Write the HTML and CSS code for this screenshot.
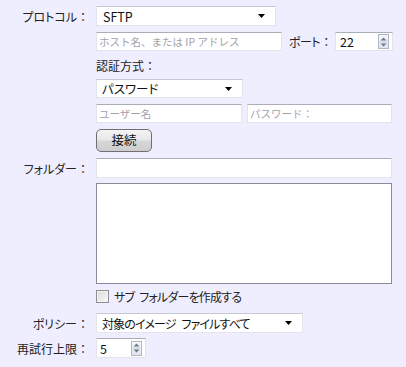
FILE: index.html
```html
<!doctype html>
<html>
<head>
  <meta charset="utf-8">
  <link rel="stylesheet" href="styles.css">
</head>
<body>
  <div class="form">

    <div class="row r1">
      <span class="label">プロトコル<span class="colon">：</span></span>
      <div class="select protocol">
        <span class="value">SFTP</span>
        <svg class="arrow" width="7" height="4" viewBox="0 0 7 4"><path d="M0 0H7L3.5 4Z" fill="#000"/></svg>
      </div>
    </div>

    <div class="row r2">
      <span class="label"></span>
      <div class="text host"><span class="hint">ホスト名、または IP アドレス</span></div>
      <span class="inline-label">ポート<span class="colon">：</span></span>
      <div class="text spin port">
        <span class="value">22</span>
        <span class="spinbtn">
          <svg width="7" height="12" viewBox="0 0 7 12"><path d="M0.5 4.5H6.5L3.5 1.5Z" fill="#6a7890"/><path d="M0.5 7.5H6.5L3.5 10.5Z" fill="#6a7890"/><path d="M0 6H7" stroke="#c4cad6" stroke-width="1"/></svg>
        </span>
      </div>
    </div>

    <div class="row r3">
      <span class="label"></span>
      <span class="sub-label">認証方式<span class="colon">：</span></span>
    </div>

    <div class="row r4">
      <span class="label"></span>
      <div class="select auth">
        <span class="value">パスワード</span>
        <svg class="arrow" width="7" height="4" viewBox="0 0 7 4"><path d="M0 0H7L3.5 4Z" fill="#000"/></svg>
      </div>
    </div>

    <div class="row r5">
      <span class="label"></span>
      <div class="text user"><span class="hint">ユーザー名</span></div>
      <div class="text password"><span class="hint">パスワード：</span></div>
    </div>

    <div class="row r6">
      <span class="label"></span>
      <button class="connect">接続</button>
    </div>

    <div class="row r7">
      <span class="label">フォルダー<span class="colon">：</span></span>
      <div class="text folder"></div>
    </div>

    <div class="row r8">
      <span class="label"></span>
      <div class="list"></div>
    </div>

    <div class="row r9">
      <span class="label"></span>
      <span class="checkbox"></span>
      <span class="check-label">サブ フォルダーを作成する</span>
    </div>

    <div class="row r10">
      <span class="label">ポリシー<span class="colon">：</span></span>
      <div class="select policy">
        <span class="value">対象のイメージ ファイルすべて</span>
        <svg class="arrow" width="7" height="4" viewBox="0 0 7 4"><path d="M0 0H7L3.5 4Z" fill="#000"/></svg>
      </div>
    </div>

    <div class="row r11">
      <span class="label">再試行上限<span class="colon">：</span></span>
      <div class="text spin retry">
        <span class="value">5</span>
        <span class="spinbtn">
          <svg width="7" height="12" viewBox="0 0 7 12"><path d="M0.5 4.5H6.5L3.5 1.5Z" fill="#6a7890"/><path d="M0.5 7.5H6.5L3.5 10.5Z" fill="#6a7890"/><path d="M0 6H7" stroke="#c4cad6" stroke-width="1"/></svg>
        </span>
      </div>
    </div>

  </div>
</body>
</html>
```

FILE: styles.css
```css
body{
  margin: 0;
  background-color: #efeeff;
  font-family: "Noto Sans CJK JP", "Noto Sans", sans-serif;
  font-size: 12px;
  color: #222;
  font-feature-settings: "palt";
}
.form{
  display: flex;
  flex-direction: column;
  width: 406px;
  height: 367px;
}
.row{
  display: flex;
  align-items: center;
}
.label{
  width: 89px;
  margin-right: 7px;
  text-align: right;
  flex-shrink: 0;
  white-space: nowrap;
}
.colon{
  font-feature-settings: normal;
}

.r1{ margin-top: 6px; height: 20px; }
.r2{ margin-top: 6px; height: 19px; }
.r3{ margin-top: 5px; height: 18px; }
.r4{ margin-top: 5px; height: 19px; }
.r5{ margin-top: 6px; height: 19px; }
.r6{ margin-top: 6px; height: 23px; }
.r7{ margin-top: 6px; height: 20px; }
.r8{ margin-top: 5px; height: 101px; align-items: stretch; }
.r9{ margin-top: 6px; height: 13px; }
.r10{ margin-top: 10px; height: 20px; }
.r11{ margin-top: 5px; height: 20px; }

.text,
.select{
  box-sizing: border-box;
  height: 100%;
  background: #fff;
  border: 1px solid #e2e4ec;
  border-top-color: #abadb8;
  display: flex;
  align-items: center;
  padding-left: 2px;
}
.select{
  border-color: #e4e4ee;
  border-top-color: #c8c8d4;
  padding-left: 6px;
  padding-right: 10px;
  justify-content: space-between;
  color: #111;
  font-size: 12.5px;
}
.protocol{ width: 180px; }
.auth{ width: 147px; padding-left: 5px; }
.policy{
  width: 207px;
  padding-left: 5px;
  font-size: 12px;
  letter-spacing: -0.9px;
  word-spacing: 4px;
}

.hint{
  color: #a2a2aa;
  white-space: nowrap;
  font-size: 10.5px;
  font-feature-settings: normal;
}
.value{
  color: #111;
}
.host{ width: 186px; }
.inline-label{
  margin-left: 7px;
  width: 46px;
  flex-shrink: 0;
  white-space: nowrap;
  letter-spacing: -0.5px;
}
.port{ width: 58px; }
.user{ width: 146px; }
.password{ width: 145px; margin-left: 5px; }

.spin{
  justify-content: space-between;
  padding-left: 4px;
  padding-right: 3px;
  font-size: 12.5px;
}
.spinbtn{
  box-sizing: border-box;
  width: 11px;
  height: 15px;
  border: 1px solid #b0b6c4;
  background: linear-gradient(#f6f8fb, #dfe4ec);
  display: flex;
  align-items: center;
  justify-content: center;
}
.retry{ width: 50px; padding-left: 3px; }

.connect{
  box-sizing: border-box;
  width: 56px;
  height: 23px;
  border: 1px solid #6e6e74;
  border-radius: 5px;
  background: linear-gradient(#f4f4f4 0%, #e8e8e8 45%, #d6d6d6 55%, #cdcdcd 100%);
  font-family: "Noto Sans CJK JP", sans-serif;
  font-size: 12.5px;
  color: #111;
  padding: 0;
  line-height: 1;
}

.folder{ width: 296px; }
.list{
  box-sizing: border-box;
  width: 296px;
  background: #fff;
  border: 1px solid #8a8a9a;
}

.checkbox{
  box-sizing: border-box;
  width: 13px;
  height: 13px;
  border: 1px solid #8e8f94;
  background: linear-gradient(135deg, #dcdcdc, #f7f7f7);
  box-shadow: inset 0 0 0 1px #f4f4f4;
}
.check-label{
  margin-left: 5px;
  letter-spacing: -0.8px;
  word-spacing: 3px;
  white-space: nowrap;
}
```
